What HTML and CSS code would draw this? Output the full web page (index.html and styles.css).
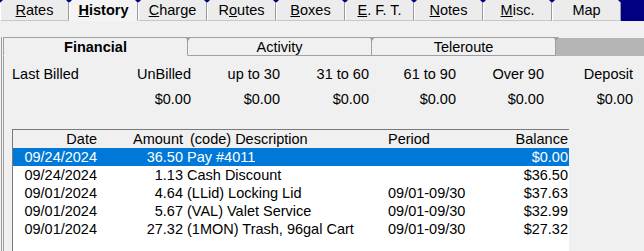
FILE: index.html
```html
<!DOCTYPE html>
<html lang="en">
<head>
    <meta charset="UTF-8">
    <meta name="viewport" content="width=device-width, initial-scale=1.0">
    <title>Account History</title>
    <link rel="stylesheet" href="styles.css">
</head>
<body>
    <div class="tabbar">
        <div class="tab"><u>R</u>ates</div>
        <div class="tab active"><u>H</u>istory</div>
        <div class="tab"><u>C</u>harge</div>
        <div class="tab">R<u>o</u>utes</div>
        <div class="tab"><u>B</u>oxes</div>
        <div class="tab"><u>E</u>. F. T.</div>
        <div class="tab"><u>N</u>otes</div>
        <div class="tab"><u>M</u>isc.</div>
        <div class="tab">Map</div>
    </div>

    <div class="frame">
        <div class="subtabs">
            <div class="subtab active">Financial</div>
            <div class="subtab">Activity</div>
            <div class="subtab">Teleroute</div>
            <div class="subtab-fill"></div>
        </div>

        <div class="panel">
            <div class="summary">
                <div class="left">Last Billed</div>
                <div>UnBilled</div>
                <div>up to 30</div>
                <div>31 to 60</div>
                <div>61 to 90</div>
                <div>Over 90</div>
                <div>Deposit</div>
                <div class="left"></div>
                <div>$0.00</div>
                <div>$0.00</div>
                <div>$0.00</div>
                <div>$0.00</div>
                <div>$0.00</div>
                <div>$0.00</div>
            </div>

            <div class="list">
                <div class="row head">
                    <div class="num">Date</div>
                    <div class="num">Amount</div>
                    <div class="desc">(code) Description</div>
                    <div>Period</div>
                    <div class="num">Balance</div>
                </div>
                <div class="row selected">
                    <div class="num">09/24/2024</div>
                    <div class="num">36.50</div>
                    <div class="desc">Pay #4011</div>
                    <div></div>
                    <div class="num">$0.00</div>
                </div>
                <div class="row">
                    <div class="num">09/24/2024</div>
                    <div class="num">1.13</div>
                    <div class="desc">Cash Discount</div>
                    <div></div>
                    <div class="num">$36.50</div>
                </div>
                <div class="row">
                    <div class="num">09/01/2024</div>
                    <div class="num">4.64</div>
                    <div class="desc">(LLid) Locking Lid</div>
                    <div>09/01-09/30</div>
                    <div class="num">$37.63</div>
                </div>
                <div class="row">
                    <div class="num">09/01/2024</div>
                    <div class="num">5.67</div>
                    <div class="desc">(VAL) Valet Service</div>
                    <div>09/01-09/30</div>
                    <div class="num">$32.99</div>
                </div>
                <div class="row">
                    <div class="num">09/01/2024</div>
                    <div class="num">27.32</div>
                    <div class="desc">(1MON) Trash, 96gal Cart</div>
                    <div>09/01-09/30</div>
                    <div class="num">$27.32</div>
                </div>
            </div>
        </div>
    </div>
</body>
</html>
```

FILE: styles.css
```css
body {
    margin: 0;
    width: 644px;
    height: 251px;
    overflow: hidden;
    background-color: #f0f0f0;
    font-family: "Liberation Sans", Arial, sans-serif;
    font-size: 14.5px;
    color: #000;
}

/* top tab strip */
.tabbar {
    display: flex;
    height: 21px;
    background-color: #000080;
}
.tab {
    width: 67px;
    height: 20px;
    line-height: 20px;
    text-align: center;
    background-color: #ececec;
    border-left: 1px solid #ffffff;
    border-right: 1px solid #9a9a9a;
    border-bottom: 1px solid #c8c8c8;
    clip-path: polygon(3px 0, calc(100% - 3px) 0, 100% 3px, 100% 100%, 0 100%, 0 3px);
}
.tab.active {
    font-weight: bold;
    background-color: #f4f4f4;
    border-bottom-color: #f4f4f4;
}

/* lower frame */
.frame {
    margin-top: 16px;
    margin-left: 1px;
    border-left: 1px solid #a0a0a0;
    height: 214px;
}
.subtabs {
    display: flex;
    height: 19px;
    padding-left: 1px;
}
.subtab {
    position: relative;
    width: 183px;
    height: 17px;
    line-height: 18px;
    text-align: center;
    border-top: 1px solid #a0a0a0;
    border-right: 1px solid #a0a0a0;
    border-bottom: 1px solid #a0a0a0;
}
.subtab:first-child {
    border-left: 1px solid #a0a0a0;
}
.subtab.active {
    font-weight: bold;
    border-bottom-color: #f0f0f0;
}
.subtab::after {
    content: "";
    position: absolute;
    top: -1px;
    right: -4px;
    border-left: 3px solid transparent;
    border-right: 3px solid transparent;
    border-top: 4px solid #a0a0a0;
}
.subtab-fill {
    flex: 1;
    margin-top: 1px;
    background-color: #b4b4b4;
}

.panel {
    margin-left: 1px;
    border-left: 1px solid #a0a0a0;
    padding-left: 8px;
    padding-top: 10px;
}

/* aging summary */
.summary {
    display: grid;
    grid-template-columns: 91px 88px 89px 89px 87px 88px 89px;
    grid-auto-rows: 16px;
    row-gap: 9px;
    line-height: 16px;
}
.summary div {
    text-align: right;
    white-space: nowrap;
}
.summary .left {
    text-align: left;
}

/* transaction list */
.list {
    margin-top: 22px;
    width: 556px;
    height: 130px;
    background-color: #ffffff;
    border-top: 1px solid #7a7a7a;
    border-left: 1px solid #7a7a7a;
}
.row {
    display: grid;
    grid-template-columns: 87px 86px 202px 102px 79px;
    height: 18px;
    line-height: 18px;
    white-space: nowrap;
}
.row .num {
    text-align: right;
    padding-right: 3px;
}
.row .num:last-child {
    padding-right: 1px;
}
.row .desc {
    padding-left: 1px;
}
.row.head {
    background-color: #f0f0f0;
}
.row.head .desc {
    padding-left: 4px;
}
.row.selected {
    background-color: #0078d7;
    color: #ffffff;
}
```
